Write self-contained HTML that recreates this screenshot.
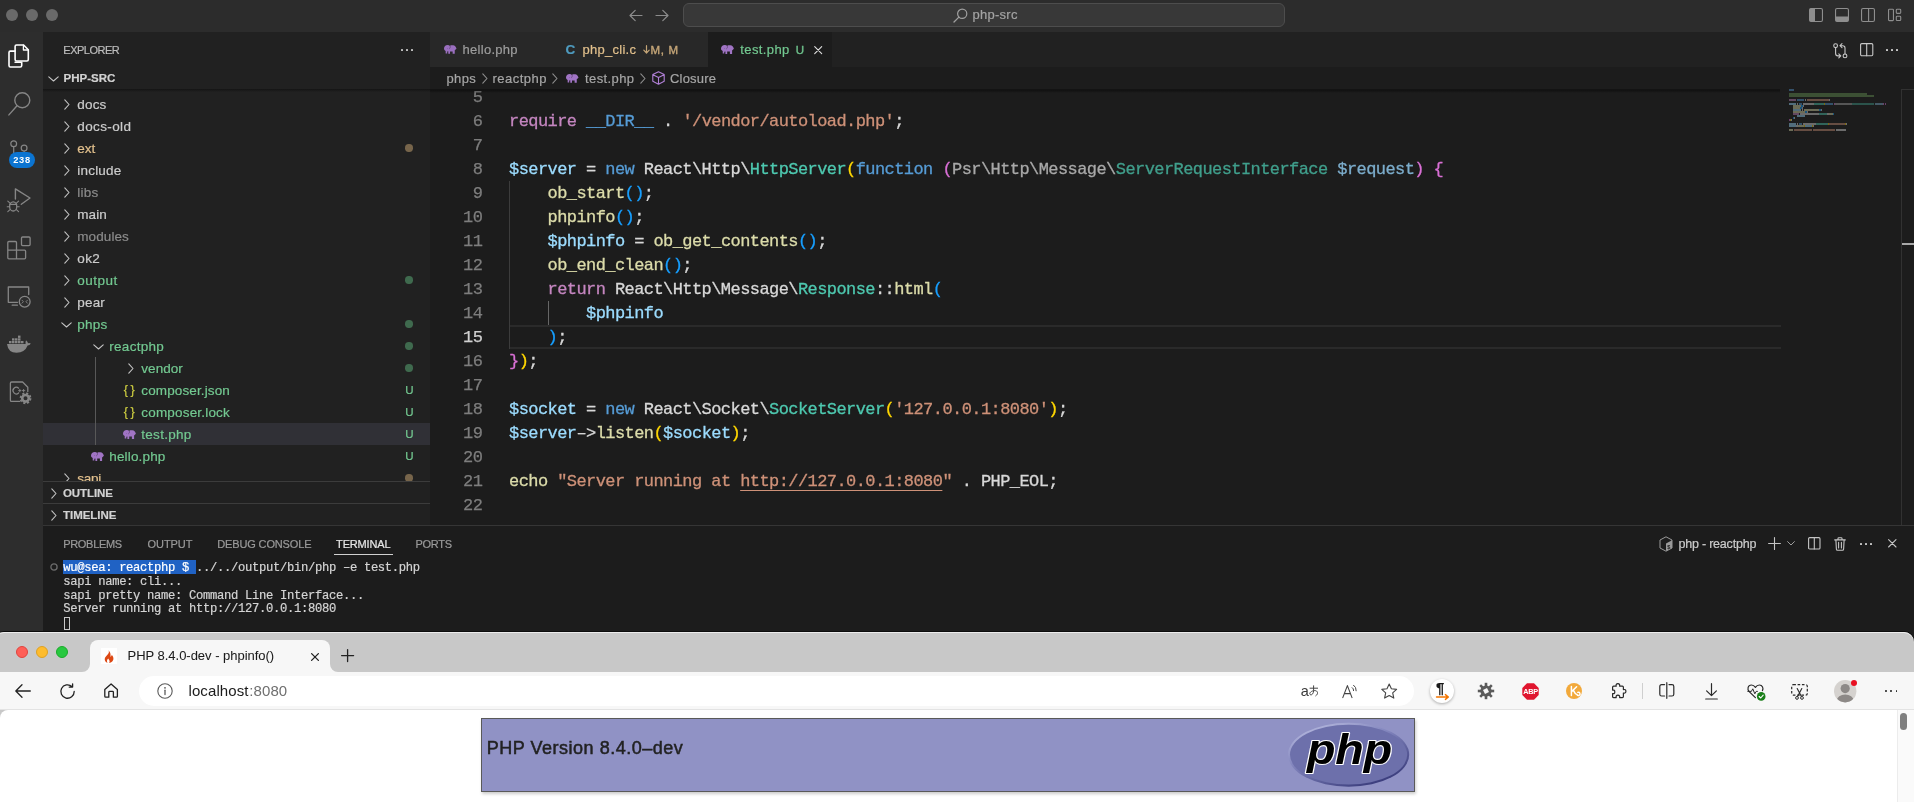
<!DOCTYPE html>
<html><head><meta charset="utf-8"><title>vscode</title>
<style>
*{box-sizing:border-box;margin:0;padding:0}
html,body{width:1914px;height:802px;overflow:hidden;background:#1c1c1c;font-family:"Liberation Sans",sans-serif;}
.t{position:absolute;white-space:pre;-webkit-text-stroke:0.2px}
.r{position:absolute;}
svg{overflow:visible}
#w{position:absolute;left:0;top:0;width:1914px;height:802px;will-change:transform}
.ln{position:absolute;left:430px;width:52.3px;text-align:right;height:24px;line-height:24px;font-family:"Liberation Mono",monospace;font-size:17px;letter-spacing:-0.572px;color:#7d7d7d;padding-top:0.5px;-webkit-text-stroke:0.25px}
.cl{position:absolute;left:509px;height:24px;line-height:24px;font-family:"Liberation Mono",monospace;font-size:17px;letter-spacing:-0.572px;white-space:pre;padding-top:0.5px;-webkit-text-stroke:0.3px}
</style></head><body><div id="w">
<div class="r" style="left:0px;top:0px;width:1914px;height:32px;background:#2c2c2c;"></div>
<div class="r" style="left:6px;top:9px;width:12px;height:12px;background:#6a6a6a;border-radius:50%;"></div>
<div class="r" style="left:26px;top:9px;width:12px;height:12px;background:#6a6a6a;border-radius:50%;"></div>
<div class="r" style="left:46px;top:9px;width:12px;height:12px;background:#6a6a6a;border-radius:50%;"></div>
<svg class="r" style="left:629px;top:9px;" width="14" height="13" viewBox="0 0 14 13"><path d="M13 6.5H1.2M6.2 1.3L1 6.5l5.2 5.2" stroke="#8c8c8c" stroke-width="1.2" fill="none" stroke-linecap="round" stroke-linejoin="round"/></svg>
<svg class="r" style="left:655px;top:9px;" width="14" height="13" viewBox="0 0 14 13"><path d="M1 6.5h11.8M7.8 1.3L13 6.5l-5.2 5.2" stroke="#8c8c8c" stroke-width="1.2" fill="none" stroke-linecap="round" stroke-linejoin="round"/></svg>
<div class="r" style="left:683px;top:3px;width:602px;height:24px;background:#383838;border:1px solid #4d4d4d;border-radius:6px;"></div>
<svg class="r" style="left:953px;top:8px;" width="15" height="15" viewBox="0 0 15 15"><circle cx="9.2" cy="5.8" r="4.6" stroke="#a0a0a0" stroke-width="1.2" fill="none"/><path d="M5.9 9.1L1 14" stroke="#a0a0a0" stroke-width="1.3" stroke-linecap="round"/></svg>
<div class="t" style="left:972.40px;top:6.00px;line-height:18px;font-size:13px;color:#a3a3a3;letter-spacing:0.275px;">php-src</div>
<svg class="r" style="left:1809px;top:8px;" width="14" height="14" viewBox="0 0 14 14"><rect x="0.55" y="0.55" width="12.9" height="12.9" rx="1.5" stroke="#8e8e8e" stroke-width="1.1" fill="none"/><path d="M0.6 2v10q0 1.4 1.4 1.4H6V0.6H2Q0.6 0.6 0.6 2z" fill="#8e8e8e"/></svg>
<svg class="r" style="left:1835px;top:8px;" width="14" height="14" viewBox="0 0 14 14"><rect x="0.55" y="0.55" width="12.9" height="12.9" rx="1.5" stroke="#8e8e8e" stroke-width="1.1" fill="none"/><path d="M0.6 8.6H13.4V12q0 1.4-1.4 1.4H2Q0.6 13.4 0.6 12z" fill="#8e8e8e"/></svg>
<svg class="r" style="left:1861px;top:8px;" width="14" height="14" viewBox="0 0 14 14"><rect x="0.55" y="0.55" width="12.9" height="12.9" rx="1.5" stroke="#8e8e8e" stroke-width="1.1" fill="none"/><path d="M7.6 0.6V13.4" stroke="#8e8e8e" stroke-width="1.1" fill="none"/></svg>
<svg class="r" style="left:1888px;top:8px;" width="14" height="14" viewBox="0 0 14 14"><rect x="0.55" y="1.2" width="4.9" height="11.4" rx="0.8" stroke="#8e8e8e" stroke-width="1.1" fill="none"/><rect x="8.3" y="1.2" width="4.4" height="4.2" rx="0.8" stroke="#8e8e8e" stroke-width="1.1" fill="none"/><rect x="8.3" y="8.3" width="4.4" height="4.2" rx="0.8" stroke="#8e8e8e" stroke-width="1.1" fill="none"/></svg>
<div class="r" style="left:0px;top:32px;width:43px;height:614px;background:#2d2d2d;"></div>
<svg class="r" style="left:0px;top:32px;" width="43" height="50" viewBox="0 32 43 50"><path d="M15.1 62.2H21.7V65.6Q21.7 67 20.3 67H10.4Q9 67 9 65.6V52.5Q9 51.1 10.4 51.1H15.1" stroke="#ffffff" stroke-width="1.6" fill="none" stroke-linejoin="round" stroke-linecap="round"/><path d="M16.5 45H23.6L28.3 49.8V59.6Q28.3 61 26.9 61H16.5Q15.1 61 15.1 59.6V46.4Q15.1 45 16.5 45Z" stroke="#ffffff" stroke-width="1.6" fill="none" stroke-linejoin="round" stroke-linecap="round"/><path d="M23.4 45.2V50H28.1" stroke="#ffffff" stroke-width="1.3" fill="none" stroke-linejoin="round" stroke-linecap="round"/></svg>
<svg class="r" style="left:0px;top:85px;" width="43" height="40" viewBox="0 85 43 40"><circle cx="22.3" cy="100.2" r="7.5" stroke="#868686" stroke-width="1.4" fill="none" stroke-linejoin="round" stroke-linecap="round"/><path d="M16.8 106L8.9 114.9" stroke="#868686" stroke-width="1.4" fill="none" stroke-linejoin="round" stroke-linecap="round"/></svg>
<svg class="r" style="left:0px;top:135px;" width="43" height="40" viewBox="0 135 43 40"><circle cx="13.7" cy="143.7" r="2.9" stroke="#868686" stroke-width="1.2" fill="none" stroke-linejoin="round" stroke-linecap="round"/><circle cx="24.1" cy="148.1" r="2.9" stroke="#868686" stroke-width="1.2" fill="none" stroke-linejoin="round" stroke-linecap="round"/><path d="M13.7 146.8V153M24.1 151V153" stroke="#868686" stroke-width="1.2" fill="none" stroke-linejoin="round" stroke-linecap="round"/></svg>
<div class="r" style="left:9px;top:152px;width:26px;height:16px;background:#0b74d1;border-radius:8px;"></div>
<div class="t" style="left:13.30px;top:153.90px;line-height:12px;font-size:9.3px;color:#ffffff;font-weight:700;letter-spacing:0.642px;-webkit-text-stroke:0;">238</div>
<svg class="r" style="left:0px;top:183px;" width="43" height="40" viewBox="0 183 43 40"><path d="M15.4 199V188.9L30 198L21.3 204.3" stroke="#868686" stroke-width="1.4" fill="none" stroke-linejoin="round" stroke-linecap="round"/><ellipse cx="13.2" cy="206.4" rx="3.6" ry="4.6" stroke="#868686" stroke-width="1.3" fill="none" stroke-linejoin="round" stroke-linecap="round"/><path d="M9.7 204.4H16.7M9.6 206.7H7.2M16.8 206.7H19.2M10 203.2L7.8 201.2M16.4 203.2L18.6 201.2M10 209.6L7.8 211.6M16.4 209.6L18.6 211.6" stroke="#868686" stroke-width="1.1" fill="none" stroke-linejoin="round" stroke-linecap="round"/></svg>
<svg class="r" style="left:0px;top:232px;" width="43" height="34" viewBox="0 232 43 34"><path d="M7.8 250.1V242.6Q7.8 241.5 8.9 241.5H15.4Q16.5 241.5 16.5 242.6V250.1H24.5Q25.6 250.1 25.6 251.2V257.7Q25.6 258.8 24.5 258.8H8.9Q7.8 258.8 7.8 257.7ZM7.8 250.1H16.5V258.8" stroke="#868686" stroke-width="1.3" fill="none" stroke-linejoin="round" stroke-linecap="round"/><rect x="21.5" y="237" width="8.6" height="8.6" rx="1.1" stroke="#868686" stroke-width="1.3" fill="none" stroke-linejoin="round" stroke-linecap="round"/></svg>
<svg class="r" style="left:0px;top:280px;" width="43" height="34" viewBox="0 280 43 34"><path d="M17.5 302.3H8.3V287H28.7V294.5" stroke="#868686" stroke-width="1.3" fill="none" stroke-linejoin="round" stroke-linecap="round"/><path d="M12.2 305.2H17.4" stroke="#868686" stroke-width="1.3" fill="none" stroke-linejoin="round" stroke-linecap="round"/><circle cx="24.7" cy="301.7" r="5.4" stroke="#868686" stroke-width="1.3" fill="none" stroke-linejoin="round" stroke-linecap="round"/><path d="M22 300.2L23.4 301.7L22 303.2M27.4 300.2L26 301.7L27.4 303.2" stroke="#868686" stroke-width="0.9" fill="none" stroke-linejoin="round" stroke-linecap="round"/></svg>
<svg class="r" style="left:0px;top:330px;" width="43" height="30" viewBox="0 330 43 30"><g fill="#868686"><rect x="9" y="341" width="2.5" height="2.3"/><rect x="12" y="341" width="2.5" height="2.3"/><rect x="15" y="341" width="2.5" height="2.3"/><rect x="18" y="341" width="2.5" height="2.3"/><rect x="21" y="341" width="2.5" height="2.3"/><rect x="12" y="338.3" width="2.5" height="2.3"/><rect x="15" y="338.3" width="2.5" height="2.3"/><rect x="18" y="338.3" width="2.5" height="2.3"/><rect x="18" y="335.6" width="2.5" height="2.3"/><path d="M7 344H25.6Q25.3 341.8 26 340.2Q27.8 341.5 28 343.2Q29.8 342.8 30.8 343.6Q29.8 345.4 27.6 345.6Q25 352.6 16.5 352.8Q8.2 352.8 7 344Z"/></g></svg>
<svg class="r" style="left:0px;top:376px;" width="43" height="34" viewBox="0 376 43 34"><path d="M19.5 401.4H11.6Q10.4 401.4 10.4 400.2V383.2Q10.4 382 11.6 382H22.6L27.8 387.2V391.5" stroke="#868686" stroke-width="1.3" fill="none" stroke-linejoin="round" stroke-linecap="round"/><path d="M18.6 388.2A3.3 3.3 0 1 0 18.6 393" stroke="#868686" stroke-width="1.2" fill="none" stroke-linejoin="round" stroke-linecap="round"/><path d="M18.6 390.6H21M19.8 389.4V391.8M22.4 390.6H24.8M23.6 389.4V391.8" stroke="#868686" stroke-width="0.9" fill="none" stroke-linejoin="round" stroke-linecap="round"/><circle cx="25.5" cy="398.3" r="3.3" stroke="#868686" stroke-width="2.6" fill="none"/><circle cx="25.5" cy="398.3" r="5" stroke="#868686" stroke-width="1.8" fill="none" stroke-dasharray="2.1 1.83"/></svg>
<div class="r" style="left:43px;top:32px;width:387px;height:493px;background:#212121;"></div>
<div class="t" style="left:63.30px;top:42.50px;line-height:15px;font-size:11px;color:#bdbdbd;letter-spacing:-0.501px;">EXPLORER</div>
<div class="r" style="left:400.7px;top:49.3px;width:2px;height:1.7px;background:#c0c0c0;border-radius:0.5px;"></div>
<div class="r" style="left:406px;top:49.3px;width:2px;height:1.7px;background:#c0c0c0;border-radius:0.5px;"></div>
<div class="r" style="left:411.2px;top:49.3px;width:2px;height:1.7px;background:#c0c0c0;border-radius:0.5px;"></div>
<svg class="r" style="left:48px;top:75.5px;" width="11" height="6" viewBox="0 0 11 6"><path d="M0.8 0.8L5.5 5L10.2 0.8" stroke="#c5c5c5" stroke-width="1.1" fill="none" stroke-linecap="round" stroke-linejoin="round"/></svg>
<div class="t" style="left:63.60px;top:70.00px;line-height:16px;font-size:11.5px;color:#d2d2d2;font-weight:700;letter-spacing:-0.009px;">PHP-SRC</div>
<div class="r" style="left:43px;top:89px;width:387px;height:3px;background:linear-gradient(#151515,#21212100);"></div>
<svg class="r" style="left:63.5px;top:98.5px;" width="6" height="11" viewBox="0 0 6 11"><path d="M0.8 0.8L5 5.5L0.8 10.2" stroke="#c5c5c5" stroke-width="1.1" fill="none" stroke-linecap="round" stroke-linejoin="round"/></svg>
<div class="t" style="left:77.30px;top:95.30px;line-height:20px;font-size:13.5px;color:#cccccc;letter-spacing:0.161px;">docs</div>
<svg class="r" style="left:63.5px;top:120.5px;" width="6" height="11" viewBox="0 0 6 11"><path d="M0.8 0.8L5 5.5L0.8 10.2" stroke="#c5c5c5" stroke-width="1.1" fill="none" stroke-linecap="round" stroke-linejoin="round"/></svg>
<div class="t" style="left:77.30px;top:117.30px;line-height:20px;font-size:13.5px;color:#cccccc;letter-spacing:0.368px;">docs-old</div>
<svg class="r" style="left:63.5px;top:142.5px;" width="6" height="11" viewBox="0 0 6 11"><path d="M0.8 0.8L5 5.5L0.8 10.2" stroke="#c5c5c5" stroke-width="1.1" fill="none" stroke-linecap="round" stroke-linejoin="round"/></svg>
<div class="t" style="left:77.30px;top:139.30px;line-height:20px;font-size:13.5px;color:#e2c08d;letter-spacing:-0.004px;">ext</div>
<div class="r" style="left:405.3px;top:144.3px;width:7.4px;height:7.4px;background:#77654b;border-radius:50%;"></div>
<svg class="r" style="left:63.5px;top:164.5px;" width="6" height="11" viewBox="0 0 6 11"><path d="M0.8 0.8L5 5.5L0.8 10.2" stroke="#c5c5c5" stroke-width="1.1" fill="none" stroke-linecap="round" stroke-linejoin="round"/></svg>
<div class="t" style="left:77.30px;top:161.30px;line-height:20px;font-size:13.5px;color:#cccccc;letter-spacing:0.203px;">include</div>
<svg class="r" style="left:63.5px;top:186.5px;" width="6" height="11" viewBox="0 0 6 11"><path d="M0.8 0.8L5 5.5L0.8 10.2" stroke="#c5c5c5" stroke-width="1.1" fill="none" stroke-linecap="round" stroke-linejoin="round"/></svg>
<div class="t" style="left:77.30px;top:183.30px;line-height:20px;font-size:13.5px;color:#8b8b8b;letter-spacing:0.248px;">libs</div>
<svg class="r" style="left:63.5px;top:208.5px;" width="6" height="11" viewBox="0 0 6 11"><path d="M0.8 0.8L5 5.5L0.8 10.2" stroke="#c5c5c5" stroke-width="1.1" fill="none" stroke-linecap="round" stroke-linejoin="round"/></svg>
<div class="t" style="left:77.30px;top:205.30px;line-height:20px;font-size:13.5px;color:#cccccc;letter-spacing:0.080px;">main</div>
<svg class="r" style="left:63.5px;top:230.5px;" width="6" height="11" viewBox="0 0 6 11"><path d="M0.8 0.8L5 5.5L0.8 10.2" stroke="#c5c5c5" stroke-width="1.1" fill="none" stroke-linecap="round" stroke-linejoin="round"/></svg>
<div class="t" style="left:77.30px;top:227.30px;line-height:20px;font-size:13.5px;color:#8b8b8b;letter-spacing:0.079px;">modules</div>
<svg class="r" style="left:63.5px;top:252.5px;" width="6" height="11" viewBox="0 0 6 11"><path d="M0.8 0.8L5 5.5L0.8 10.2" stroke="#c5c5c5" stroke-width="1.1" fill="none" stroke-linecap="round" stroke-linejoin="round"/></svg>
<div class="t" style="left:77.30px;top:249.30px;line-height:20px;font-size:13.5px;color:#cccccc;letter-spacing:0.367px;">ok2</div>
<svg class="r" style="left:63.5px;top:274.5px;" width="6" height="11" viewBox="0 0 6 11"><path d="M0.8 0.8L5 5.5L0.8 10.2" stroke="#c5c5c5" stroke-width="1.1" fill="none" stroke-linecap="round" stroke-linejoin="round"/></svg>
<div class="t" style="left:77.30px;top:271.30px;line-height:20px;font-size:13.5px;color:#73c991;letter-spacing:0.493px;">output</div>
<div class="r" style="left:405.3px;top:276.3px;width:7.4px;height:7.4px;background:#3f6a4e;border-radius:50%;"></div>
<svg class="r" style="left:63.5px;top:296.5px;" width="6" height="11" viewBox="0 0 6 11"><path d="M0.8 0.8L5 5.5L0.8 10.2" stroke="#c5c5c5" stroke-width="1.1" fill="none" stroke-linecap="round" stroke-linejoin="round"/></svg>
<div class="t" style="left:77.30px;top:293.30px;line-height:20px;font-size:13.5px;color:#cccccc;letter-spacing:0.160px;">pear</div>
<svg class="r" style="left:60.5px;top:321.5px;" width="11" height="6" viewBox="0 0 11 6"><path d="M0.8 0.8L5.5 5L10.2 0.8" stroke="#c5c5c5" stroke-width="1.1" fill="none" stroke-linecap="round" stroke-linejoin="round"/></svg>
<div class="t" style="left:77.30px;top:315.30px;line-height:20px;font-size:13.5px;color:#73c991;letter-spacing:0.242px;">phps</div>
<div class="r" style="left:405.3px;top:320.3px;width:7.4px;height:7.4px;background:#3f6a4e;border-radius:50%;"></div>
<svg class="r" style="left:92.5px;top:343.5px;" width="11" height="6" viewBox="0 0 11 6"><path d="M0.8 0.8L5.5 5L10.2 0.8" stroke="#c5c5c5" stroke-width="1.1" fill="none" stroke-linecap="round" stroke-linejoin="round"/></svg>
<div class="t" style="left:109.30px;top:337.30px;line-height:20px;font-size:13.5px;color:#73c991;letter-spacing:0.280px;">reactphp</div>
<div class="r" style="left:405.3px;top:342.3px;width:7.4px;height:7.4px;background:#3f6a4e;border-radius:50%;"></div>
<svg class="r" style="left:127.5px;top:362.5px;" width="6" height="11" viewBox="0 0 6 11"><path d="M0.8 0.8L5 5.5L0.8 10.2" stroke="#c5c5c5" stroke-width="1.1" fill="none" stroke-linecap="round" stroke-linejoin="round"/></svg>
<div class="t" style="left:141.30px;top:359.30px;line-height:20px;font-size:13.5px;color:#73c991;letter-spacing:0.044px;">vendor</div>
<div class="r" style="left:405.3px;top:364.3px;width:7.4px;height:7.4px;background:#3f6a4e;border-radius:50%;"></div>
<div class="t" style="left:123.80px;top:382.50px;line-height:14px;font-size:12.5px;color:#cbcb41;letter-spacing:2.650px;">{}</div>
<div class="t" style="left:141.30px;top:381.30px;line-height:20px;font-size:13.5px;color:#73c991;letter-spacing:0.121px;">composer.json</div>
<div class="t" style="left:405.20px;top:382.20px;line-height:16px;font-size:11.5px;color:#73c991;">U</div>
<div class="t" style="left:123.80px;top:404.50px;line-height:14px;font-size:12.5px;color:#cbcb41;letter-spacing:2.650px;">{}</div>
<div class="t" style="left:141.30px;top:403.30px;line-height:20px;font-size:13.5px;color:#73c991;letter-spacing:0.184px;">composer.lock</div>
<div class="t" style="left:405.20px;top:404.20px;line-height:16px;font-size:11.5px;color:#73c991;">U</div>
<div class="r" style="left:43px;top:423px;width:387px;height:22px;background:#303036;"></div>
<svg class="r" style="left:122.7px;top:429.6px;" width="13" height="9.2" viewBox="0 0 13 9.2"><path fill="#a074c4" d="M3.9 0C1.5 0 0 1.6 0 3.6C0 4.9 0.7 5.7 1.7 6.1V8.6H3.3V6.7L4.4 6.5V8.9H6.2V6.6H8.9V9.1H11.1V5.4L12.9 3.7C12.2 1.6 11.2 0.3 9.4 0.3H6.9L6.2 0.9C5.6 0.3 4.8 0 3.9 0Z"/><path d="M6.3 0.9C6.7 2.2 6.3 3.3 5.4 3.9" stroke="rgba(0,0,0,.55)" stroke-width="0.55" fill="none"/><circle cx="3.5" cy="3.6" r="0.4" fill="rgba(0,0,0,.35)"/></svg>
<div class="t" style="left:141.30px;top:425.30px;line-height:20px;font-size:13.5px;color:#73c991;letter-spacing:0.281px;">test.php</div>
<div class="t" style="left:405.20px;top:426.20px;line-height:16px;font-size:11.5px;color:#73c991;">U</div>
<svg class="r" style="left:90.7px;top:451.6px;" width="13" height="9.2" viewBox="0 0 13 9.2"><path fill="#a074c4" d="M3.9 0C1.5 0 0 1.6 0 3.6C0 4.9 0.7 5.7 1.7 6.1V8.6H3.3V6.7L4.4 6.5V8.9H6.2V6.6H8.9V9.1H11.1V5.4L12.9 3.7C12.2 1.6 11.2 0.3 9.4 0.3H6.9L6.2 0.9C5.6 0.3 4.8 0 3.9 0Z"/><path d="M6.3 0.9C6.7 2.2 6.3 3.3 5.4 3.9" stroke="rgba(0,0,0,.55)" stroke-width="0.55" fill="none"/><circle cx="3.5" cy="3.6" r="0.4" fill="rgba(0,0,0,.35)"/></svg>
<div class="t" style="left:109.30px;top:447.30px;line-height:20px;font-size:13.5px;color:#73c991;letter-spacing:0.150px;">hello.php</div>
<div class="t" style="left:405.20px;top:448.20px;line-height:16px;font-size:11.5px;color:#73c991;">U</div>
<svg class="r" style="left:63.5px;top:472.5px;" width="6" height="11" viewBox="0 0 6 11"><path d="M0.8 0.8L5 5.5L0.8 10.2" stroke="#c5c5c5" stroke-width="1.1" fill="none" stroke-linecap="round" stroke-linejoin="round"/></svg>
<div class="t" style="left:77.30px;top:469.30px;line-height:20px;font-size:13.5px;color:#e2c08d;letter-spacing:-0.255px;">sapi</div>
<div class="r" style="left:405.3px;top:474.3px;width:7.4px;height:7.4px;background:#77654b;border-radius:50%;"></div>
<div class="r" style="left:95px;top:357px;width:1px;height:88px;background:#585858;"></div>
<div class="r" style="left:43px;top:481px;width:387px;height:44px;background:#212121;"></div>
<div class="r" style="left:43px;top:481px;width:387px;height:1px;background:#3c3c3c;"></div>
<div class="r" style="left:43px;top:503px;width:387px;height:1px;background:#3c3c3c;"></div>
<svg class="r" style="left:50.5px;top:487.5px;" width="6" height="11" viewBox="0 0 6 11"><path d="M0.8 0.8L5 5.5L0.8 10.2" stroke="#c5c5c5" stroke-width="1.1" fill="none" stroke-linecap="round" stroke-linejoin="round"/></svg>
<div class="t" style="left:63.00px;top:485.00px;line-height:16px;font-size:11.5px;color:#d2d2d2;font-weight:700;letter-spacing:-0.078px;">OUTLINE</div>
<svg class="r" style="left:50.5px;top:509.5px;" width="6" height="11" viewBox="0 0 6 11"><path d="M0.8 0.8L5 5.5L0.8 10.2" stroke="#c5c5c5" stroke-width="1.1" fill="none" stroke-linecap="round" stroke-linejoin="round"/></svg>
<div class="t" style="left:63.00px;top:507.00px;line-height:16px;font-size:11.5px;color:#d2d2d2;font-weight:700;letter-spacing:-0.024px;">TIMELINE</div>
<div class="r" style="left:430px;top:32px;width:1484px;height:493px;background:#1c1c1c;"></div>
<div class="r" style="left:430px;top:32px;width:1484px;height:35px;background:#212121;"></div>
<div class="r" style="left:430px;top:32px;width:119.5px;height:35px;background:#282828;"></div>
<div class="r" style="left:550.3px;top:32px;width:157.4px;height:35px;background:#282828;"></div>
<div class="r" style="left:708px;top:32px;width:124px;height:35px;background:#1c1c1c;"></div>
<svg class="r" style="left:443.6px;top:45px;" width="12.6" height="9" viewBox="0 0 13 9.2"><path fill="#9a6fbf" d="M3.9 0C1.5 0 0 1.6 0 3.6C0 4.9 0.7 5.7 1.7 6.1V8.6H3.3V6.7L4.4 6.5V8.9H6.2V6.6H8.9V9.1H11.1V5.4L12.9 3.7C12.2 1.6 11.2 0.3 9.4 0.3H6.9L6.2 0.9C5.6 0.3 4.8 0 3.9 0Z"/><path d="M6.3 0.9C6.7 2.2 6.3 3.3 5.4 3.9" stroke="rgba(0,0,0,.55)" stroke-width="0.55" fill="none"/><circle cx="3.5" cy="3.6" r="0.4" fill="rgba(0,0,0,.35)"/></svg>
<div class="t" style="left:462.60px;top:40.60px;line-height:18px;font-size:13px;color:#9d9d9d;letter-spacing:0.279px;">hello.php</div>
<div class="t" style="left:565.60px;top:40.50px;line-height:18px;font-size:13.5px;color:#4f9cc0;font-weight:700;">C</div>
<div class="t" style="left:582.60px;top:40.60px;line-height:18px;font-size:13px;color:#e2c08d;letter-spacing:0.261px;">php_cli.c</div>
<svg class="r" style="left:642.5px;top:45px;" width="7" height="9" viewBox="0 0 7 9"><path d="M3.5 0.7V8M0.8 5.2L3.5 8L6.2 5.2" stroke="#c4a577" stroke-width="1.2" fill="none" stroke-linecap="round" stroke-linejoin="round"/></svg>
<div class="t" style="left:650.50px;top:41.80px;line-height:16px;font-size:11.5px;color:#c4a577;letter-spacing:0.717px;-webkit-text-stroke:0.4px;">M, M</div>
<svg class="r" style="left:721px;top:44.8px;" width="13" height="9.2" viewBox="0 0 13 9.2"><path fill="#a074c4" d="M3.9 0C1.5 0 0 1.6 0 3.6C0 4.9 0.7 5.7 1.7 6.1V8.6H3.3V6.7L4.4 6.5V8.9H6.2V6.6H8.9V9.1H11.1V5.4L12.9 3.7C12.2 1.6 11.2 0.3 9.4 0.3H6.9L6.2 0.9C5.6 0.3 4.8 0 3.9 0Z"/><path d="M6.3 0.9C6.7 2.2 6.3 3.3 5.4 3.9" stroke="rgba(0,0,0,.55)" stroke-width="0.55" fill="none"/><circle cx="3.5" cy="3.6" r="0.4" fill="rgba(0,0,0,.35)"/></svg>
<div class="t" style="left:740.30px;top:40.60px;line-height:18px;font-size:13px;color:#73c991;letter-spacing:0.392px;">test.php</div>
<div class="t" style="left:795.80px;top:41.80px;line-height:16px;font-size:11.5px;color:#6cbf8a;-webkit-text-stroke:0.4px;">U</div>
<svg class="r" style="left:814px;top:45.8px;" width="8.4" height="8.4" viewBox="0 0 8.4 8.4"><path d="M0.7 0.7L7.7 7.7M7.7 0.7L0.7 7.7" stroke="#e0e0e0" stroke-width="1.1" stroke-linecap="round"/></svg>
<svg class="r" style="left:1832.5px;top:42.5px;" width="15" height="16" viewBox="0 0 15 16"><circle cx="2.6" cy="2.7" r="1.9" stroke="#c8c8c8" stroke-width="1.1" fill="none" stroke-linecap="round" stroke-linejoin="round"/><circle cx="12" cy="12.9" r="1.9" stroke="#c8c8c8" stroke-width="1.1" fill="none" stroke-linecap="round" stroke-linejoin="round"/><path d="M2.6 4.7V10.6Q2.6 12.9 4.9 12.9H7.6M5.8 10.9L7.8 12.9L5.8 14.9M12 10.9V5Q12 2.7 9.7 2.7H7.2M9 0.7L7 2.7L9 4.7" stroke="#c8c8c8" stroke-width="1.1" fill="none" stroke-linecap="round" stroke-linejoin="round"/></svg>
<svg class="r" style="left:1860px;top:43px;" width="13.4" height="13.4" viewBox="0 0 13.4 13.4"><rect x="0.6" y="0.6" width="12.2" height="12.2" rx="1.2" stroke="#c8c8c8" stroke-width="1.1" fill="none" stroke-linecap="round" stroke-linejoin="round"/><path d="M6.7 0.6V12.8" stroke="#c8c8c8" stroke-width="1.1" fill="none" stroke-linecap="round" stroke-linejoin="round"/></svg>
<div class="r" style="left:1885.7px;top:49.4px;width:2px;height:1.7px;background:#c8c8c8;border-radius:0.5px;"></div>
<div class="r" style="left:1891px;top:49.4px;width:2px;height:1.7px;background:#c8c8c8;border-radius:0.5px;"></div>
<div class="r" style="left:1896.3px;top:49.4px;width:2px;height:1.7px;background:#c8c8c8;border-radius:0.5px;"></div>
<div class="t" style="left:446.50px;top:69.90px;line-height:18px;font-size:13px;color:#a6a6a6;letter-spacing:0.370px;">phps</div>
<svg class="r" style="left:481.6px;top:73.3px;" width="6" height="11" viewBox="0 0 6 11"><path d="M0.8 0.8L5 5.5L0.8 10.2" stroke="#8f8f8f" stroke-width="1.1" fill="none" stroke-linecap="round" stroke-linejoin="round"/></svg>
<div class="t" style="left:492.40px;top:69.90px;line-height:18px;font-size:13px;color:#a6a6a6;letter-spacing:0.487px;">reactphp</div>
<svg class="r" style="left:552px;top:73.3px;" width="6" height="11" viewBox="0 0 6 11"><path d="M0.8 0.8L5 5.5L0.8 10.2" stroke="#8f8f8f" stroke-width="1.1" fill="none" stroke-linecap="round" stroke-linejoin="round"/></svg>
<svg class="r" style="left:565.8px;top:74px;" width="12.6" height="9" viewBox="0 0 13 9.2"><path fill="#a074c4" d="M3.9 0C1.5 0 0 1.6 0 3.6C0 4.9 0.7 5.7 1.7 6.1V8.6H3.3V6.7L4.4 6.5V8.9H6.2V6.6H8.9V9.1H11.1V5.4L12.9 3.7C12.2 1.6 11.2 0.3 9.4 0.3H6.9L6.2 0.9C5.6 0.3 4.8 0 3.9 0Z"/><path d="M6.3 0.9C6.7 2.2 6.3 3.3 5.4 3.9" stroke="rgba(0,0,0,.55)" stroke-width="0.55" fill="none"/><circle cx="3.5" cy="3.6" r="0.4" fill="rgba(0,0,0,.35)"/></svg>
<div class="t" style="left:585.00px;top:69.90px;line-height:18px;font-size:13px;color:#a6a6a6;letter-spacing:0.392px;">test.php</div>
<svg class="r" style="left:640px;top:73.3px;" width="6" height="11" viewBox="0 0 6 11"><path d="M0.8 0.8L5 5.5L0.8 10.2" stroke="#8f8f8f" stroke-width="1.1" fill="none" stroke-linecap="round" stroke-linejoin="round"/></svg>
<svg class="r" style="left:652.3px;top:71.3px;" width="13" height="14" viewBox="0 0 13 14"><path d="M6.5 0.8L12.2 3.6V10.2L6.5 13.2L0.8 10.2V3.6ZM0.9 3.7L6.5 6.6L12.1 3.7M6.5 6.6V13.1" stroke="#b180d7" stroke-width="1.1" fill="none" stroke-linejoin="round"/></svg>
<div class="t" style="left:670.00px;top:69.90px;line-height:18px;font-size:13px;color:#a6a6a6;letter-spacing:0.201px;">Closure</div>
<div class="r" style="left:510px;top:325px;width:1271px;height:24px;background:transparent;border-top:2px solid #2a2a2a;border-bottom:2px solid #2a2a2a;"></div>
<div class="r" style="left:509px;top:181px;width:1px;height:168px;background:#3c3c3c;"></div>
<div class="r" style="left:548px;top:301px;width:1px;height:24px;background:#666666;"></div>
<div class="ln" style="top:85px;">5</div>
<div class="ln" style="top:109px;">6</div>
<div class="cl" style="top:109px"><span style="color:#c586c0;">require</span><span style="color:#d8d8d8;"> </span><span style="color:#569cd6;">__DIR__</span><span style="color:#d8d8d8;"> . </span><span style="color:#ce9178;">'/vendor/autoload.php'</span><span style="color:#d8d8d8;">;</span></div>
<div class="ln" style="top:133px;">7</div>
<div class="ln" style="top:157px;">8</div>
<div class="cl" style="top:157px"><span style="color:#9cdcfe;">$server</span><span style="color:#d8d8d8;"> = </span><span style="color:#569cd6;">new</span><span style="color:#d8d8d8;"> React\Http\</span><span style="color:#4ec9b0;">HttpServer</span><span style="color:#ffd700;">(</span><span style="color:#569cd6;">function</span><span style="color:#d8d8d8;"> </span><span style="color:#da70d6;">(</span><span style="color:#a8a8a8;">Psr\Http\Message\</span><span style="color:#409f8c;">ServerRequestInterface</span><span style="color:#d8d8d8;"> </span><span style="color:#7cadcc;">$request</span><span style="color:#da70d6;">)</span><span style="color:#d8d8d8;"> </span><span style="color:#da70d6;">{</span></div>
<div class="ln" style="top:181px;">9</div>
<div class="cl" style="top:181px"><span style="color:#d8d8d8;">    </span><span style="color:#dcdcaa;">ob_start</span><span style="color:#179fff;">()</span><span style="color:#d8d8d8;">;</span></div>
<div class="ln" style="top:205px;">10</div>
<div class="cl" style="top:205px"><span style="color:#d8d8d8;">    </span><span style="color:#dcdcaa;">phpinfo</span><span style="color:#179fff;">()</span><span style="color:#d8d8d8;">;</span></div>
<div class="ln" style="top:229px;">11</div>
<div class="cl" style="top:229px"><span style="color:#d8d8d8;">    </span><span style="color:#9cdcfe;">$phpinfo</span><span style="color:#d8d8d8;"> = </span><span style="color:#dcdcaa;">ob_get_contents</span><span style="color:#179fff;">()</span><span style="color:#d8d8d8;">;</span></div>
<div class="ln" style="top:253px;">12</div>
<div class="cl" style="top:253px"><span style="color:#d8d8d8;">    </span><span style="color:#dcdcaa;">ob_end_clean</span><span style="color:#179fff;">()</span><span style="color:#d8d8d8;">;</span></div>
<div class="ln" style="top:277px;">13</div>
<div class="cl" style="top:277px"><span style="color:#d8d8d8;">    </span><span style="color:#c586c0;">return</span><span style="color:#d8d8d8;"> React\Http\Message\</span><span style="color:#4ec9b0;">Response</span><span style="color:#d8d8d8;">::</span><span style="color:#dcdcaa;">html</span><span style="color:#179fff;">(</span></div>
<div class="ln" style="top:301px;">14</div>
<div class="cl" style="top:301px"><span style="color:#d8d8d8;">        </span><span style="color:#9cdcfe;">$phpinfo</span></div>
<div class="ln" style="top:325px;color:#d0d0d0;">15</div>
<div class="cl" style="top:325px"><span style="color:#d8d8d8;">    </span><span style="color:#179fff;">)</span><span style="color:#d8d8d8;">;</span></div>
<div class="ln" style="top:349px;">16</div>
<div class="cl" style="top:349px"><span style="color:#da70d6;">}</span><span style="color:#ffd700;">)</span><span style="color:#d8d8d8;">;</span></div>
<div class="ln" style="top:373px;">17</div>
<div class="ln" style="top:397px;">18</div>
<div class="cl" style="top:397px"><span style="color:#9cdcfe;">$socket</span><span style="color:#d8d8d8;"> = </span><span style="color:#569cd6;">new</span><span style="color:#d8d8d8;"> React\Socket\</span><span style="color:#4ec9b0;">SocketServer</span><span style="color:#ffd700;">(</span><span style="color:#ce9178;">'127.0.0.1:8080'</span><span style="color:#ffd700;">)</span><span style="color:#d8d8d8;">;</span></div>
<div class="ln" style="top:421px;">19</div>
<div class="cl" style="top:421px"><span style="color:#9cdcfe;">$server</span><span style="color:#d8d8d8;">–&gt;</span><span style="color:#dcdcaa;">listen</span><span style="color:#ffd700;">(</span><span style="color:#9cdcfe;">$socket</span><span style="color:#ffd700;">)</span><span style="color:#d8d8d8;">;</span></div>
<div class="ln" style="top:445px;">20</div>
<div class="ln" style="top:469px;">21</div>
<div class="cl" style="top:469px"><span style="color:#dcdcaa;">echo</span><span style="color:#d8d8d8;"> </span><span style="color:#ce9178;">"Server running at </span><span style="color:#ce9178;text-decoration:underline;text-underline-offset:4px;text-decoration-thickness:1px;">http://127.0.0.1:8080</span><span style="color:#ce9178;">"</span><span style="color:#d8d8d8;"> . PHP_EOL;</span></div>
<div class="ln" style="top:493px;">22</div>
<div class="r" style="left:430px;top:89px;width:1350px;height:4px;background:linear-gradient(rgba(0,0,0,.55),rgba(0,0,0,0));"></div>
<div class="r" style="left:430px;top:88.5px;width:1350px;height:1.2px;background:#131313;"></div>
<div class="r" style="left:1789px;top:99.05px;width:7px;height:1.7px;background:#c586c0;opacity:.42;"></div>
<div class="r" style="left:1797px;top:99.05px;width:7px;height:1.7px;background:#569cd6;opacity:.42;"></div>
<div class="r" style="left:1805px;top:99.05px;width:1px;height:1.7px;background:#d8d8d8;opacity:.42;"></div>
<div class="r" style="left:1807px;top:99.05px;width:22px;height:1.7px;background:#ce9178;opacity:.42;"></div>
<div class="r" style="left:1829px;top:99.05px;width:1px;height:1.7px;background:#d8d8d8;opacity:.42;"></div>
<div class="r" style="left:1789px;top:103.07px;width:7px;height:1.7px;background:#9cdcfe;opacity:.42;"></div>
<div class="r" style="left:1797px;top:103.07px;width:1px;height:1.7px;background:#d8d8d8;opacity:.42;"></div>
<div class="r" style="left:1799px;top:103.07px;width:3px;height:1.7px;background:#569cd6;opacity:.42;"></div>
<div class="r" style="left:1803px;top:103.07px;width:11px;height:1.7px;background:#d8d8d8;opacity:.42;"></div>
<div class="r" style="left:1814px;top:103.07px;width:10px;height:1.7px;background:#4ec9b0;opacity:.42;"></div>
<div class="r" style="left:1824px;top:103.07px;width:1px;height:1.7px;background:#ffd700;opacity:.42;"></div>
<div class="r" style="left:1825px;top:103.07px;width:8px;height:1.7px;background:#569cd6;opacity:.42;"></div>
<div class="r" style="left:1834px;top:103.07px;width:1px;height:1.7px;background:#da70d6;opacity:.42;"></div>
<div class="r" style="left:1835px;top:103.07px;width:17px;height:1.7px;background:#a8a8a8;opacity:.42;"></div>
<div class="r" style="left:1852px;top:103.07px;width:22px;height:1.7px;background:#409f8c;opacity:.42;"></div>
<div class="r" style="left:1875px;top:103.07px;width:8px;height:1.7px;background:#7cadcc;opacity:.42;"></div>
<div class="r" style="left:1883px;top:103.07px;width:1px;height:1.7px;background:#da70d6;opacity:.42;"></div>
<div class="r" style="left:1885px;top:103.07px;width:1px;height:1.7px;background:#da70d6;opacity:.42;"></div>
<div class="r" style="left:1793px;top:105.08px;width:8px;height:1.7px;background:#dcdcaa;opacity:.42;"></div>
<div class="r" style="left:1801px;top:105.08px;width:2px;height:1.7px;background:#179fff;opacity:.42;"></div>
<div class="r" style="left:1803px;top:105.08px;width:1px;height:1.7px;background:#d8d8d8;opacity:.42;"></div>
<div class="r" style="left:1793px;top:107.09px;width:7px;height:1.7px;background:#dcdcaa;opacity:.42;"></div>
<div class="r" style="left:1800px;top:107.09px;width:2px;height:1.7px;background:#179fff;opacity:.42;"></div>
<div class="r" style="left:1802px;top:107.09px;width:1px;height:1.7px;background:#d8d8d8;opacity:.42;"></div>
<div class="r" style="left:1793px;top:109.1px;width:8px;height:1.7px;background:#9cdcfe;opacity:.42;"></div>
<div class="r" style="left:1802px;top:109.1px;width:1px;height:1.7px;background:#d8d8d8;opacity:.42;"></div>
<div class="r" style="left:1804px;top:109.1px;width:15px;height:1.7px;background:#dcdcaa;opacity:.42;"></div>
<div class="r" style="left:1819px;top:109.1px;width:2px;height:1.7px;background:#179fff;opacity:.42;"></div>
<div class="r" style="left:1821px;top:109.1px;width:1px;height:1.7px;background:#d8d8d8;opacity:.42;"></div>
<div class="r" style="left:1793px;top:111.11px;width:12px;height:1.7px;background:#dcdcaa;opacity:.42;"></div>
<div class="r" style="left:1805px;top:111.11px;width:2px;height:1.7px;background:#179fff;opacity:.42;"></div>
<div class="r" style="left:1807px;top:111.11px;width:1px;height:1.7px;background:#d8d8d8;opacity:.42;"></div>
<div class="r" style="left:1793px;top:113.12px;width:6px;height:1.7px;background:#c586c0;opacity:.42;"></div>
<div class="r" style="left:1800px;top:113.12px;width:19px;height:1.7px;background:#d8d8d8;opacity:.42;"></div>
<div class="r" style="left:1819px;top:113.12px;width:8px;height:1.7px;background:#4ec9b0;opacity:.42;"></div>
<div class="r" style="left:1827px;top:113.12px;width:2px;height:1.7px;background:#d8d8d8;opacity:.42;"></div>
<div class="r" style="left:1829px;top:113.12px;width:4px;height:1.7px;background:#dcdcaa;opacity:.42;"></div>
<div class="r" style="left:1833px;top:113.12px;width:1px;height:1.7px;background:#179fff;opacity:.42;"></div>
<div class="r" style="left:1797px;top:115.13px;width:8px;height:1.7px;background:#9cdcfe;opacity:.42;"></div>
<div class="r" style="left:1793px;top:117.14px;width:1px;height:1.7px;background:#179fff;opacity:.42;"></div>
<div class="r" style="left:1794px;top:117.14px;width:1px;height:1.7px;background:#d8d8d8;opacity:.42;"></div>
<div class="r" style="left:1789px;top:119.15px;width:1px;height:1.7px;background:#da70d6;opacity:.42;"></div>
<div class="r" style="left:1790px;top:119.15px;width:1px;height:1.7px;background:#ffd700;opacity:.42;"></div>
<div class="r" style="left:1791px;top:119.15px;width:1px;height:1.7px;background:#d8d8d8;opacity:.42;"></div>
<div class="r" style="left:1789px;top:123.17px;width:7px;height:1.7px;background:#9cdcfe;opacity:.42;"></div>
<div class="r" style="left:1797px;top:123.17px;width:1px;height:1.7px;background:#d8d8d8;opacity:.42;"></div>
<div class="r" style="left:1799px;top:123.17px;width:3px;height:1.7px;background:#569cd6;opacity:.42;"></div>
<div class="r" style="left:1803px;top:123.17px;width:13px;height:1.7px;background:#d8d8d8;opacity:.42;"></div>
<div class="r" style="left:1816px;top:123.17px;width:12px;height:1.7px;background:#4ec9b0;opacity:.42;"></div>
<div class="r" style="left:1828px;top:123.17px;width:1px;height:1.7px;background:#ffd700;opacity:.42;"></div>
<div class="r" style="left:1829px;top:123.17px;width:16px;height:1.7px;background:#ce9178;opacity:.42;"></div>
<div class="r" style="left:1845px;top:123.17px;width:1px;height:1.7px;background:#ffd700;opacity:.42;"></div>
<div class="r" style="left:1846px;top:123.17px;width:1px;height:1.7px;background:#d8d8d8;opacity:.42;"></div>
<div class="r" style="left:1789px;top:125.18px;width:7px;height:1.7px;background:#9cdcfe;opacity:.42;"></div>
<div class="r" style="left:1796px;top:125.18px;width:2px;height:1.7px;background:#d8d8d8;opacity:.42;"></div>
<div class="r" style="left:1798px;top:125.18px;width:6px;height:1.7px;background:#dcdcaa;opacity:.42;"></div>
<div class="r" style="left:1804px;top:125.18px;width:1px;height:1.7px;background:#ffd700;opacity:.42;"></div>
<div class="r" style="left:1805px;top:125.18px;width:7px;height:1.7px;background:#9cdcfe;opacity:.42;"></div>
<div class="r" style="left:1812px;top:125.18px;width:1px;height:1.7px;background:#ffd700;opacity:.42;"></div>
<div class="r" style="left:1813px;top:125.18px;width:1px;height:1.7px;background:#d8d8d8;opacity:.42;"></div>
<div class="r" style="left:1789px;top:129.2px;width:4px;height:1.7px;background:#dcdcaa;opacity:.42;"></div>
<div class="r" style="left:1794px;top:129.2px;width:18px;height:1.7px;background:#ce9178;opacity:.42;"></div>
<div class="r" style="left:1813px;top:129.2px;width:21px;height:1.7px;background:#ce9178;opacity:.42;"></div>
<div class="r" style="left:1834px;top:129.2px;width:1px;height:1.7px;background:#ce9178;opacity:.42;"></div>
<div class="r" style="left:1836px;top:129.2px;width:10px;height:1.7px;background:#d8d8d8;opacity:.42;"></div>
<div class="r" style="left:1789px;top:89px;width:5px;height:1.7px;background:#569cd6;opacity:.42;"></div>
<div class="r" style="left:1789px;top:93.02px;width:78px;height:1.7px;background:#6a9955;opacity:.42;"></div>
<div class="r" style="left:1789px;top:95.03px;width:85px;height:1.7px;background:#6a9955;opacity:.42;"></div>
<div class="r" style="left:1901px;top:89px;width:1px;height:436px;background:#313131;"></div>
<div class="r" style="left:1901px;top:89px;width:13px;height:1px;background:#313131;"></div>
<div class="r" style="left:1902px;top:242.5px;width:12px;height:2px;background:#a8a8a8;"></div>
<div class="r" style="left:43px;top:525px;width:1871px;height:107px;background:#1c1c1c;"></div>
<div class="r" style="left:43px;top:525px;width:1871px;height:1px;background:#353535;"></div>
<div class="t" style="left:63.20px;top:536.50px;line-height:15px;font-size:11px;color:#9a9a9a;letter-spacing:-0.304px;">PROBLEMS</div>
<div class="t" style="left:147.60px;top:536.50px;line-height:15px;font-size:11px;color:#9a9a9a;letter-spacing:-0.084px;">OUTPUT</div>
<div class="t" style="left:217.30px;top:536.50px;line-height:15px;font-size:11px;color:#9a9a9a;letter-spacing:-0.147px;">DEBUG CONSOLE</div>
<div class="t" style="left:336.10px;top:536.50px;line-height:15px;font-size:11px;color:#e7e7e7;letter-spacing:-0.160px;">TERMINAL</div>
<div class="t" style="left:415.40px;top:536.50px;line-height:15px;font-size:11px;color:#9a9a9a;letter-spacing:-0.224px;">PORTS</div>
<div class="r" style="left:334px;top:554px;width:59px;height:1px;background:#d0d0d0;"></div>
<div class="r" style="left:63.2px;top:560px;width:132.8px;height:13.8px;background:#2062c4;"></div>
<svg class="r" style="left:50px;top:563px;" width="8" height="8" viewBox="0 0 8 8"><circle cx="4" cy="4" r="3.1" stroke="#6b6b6b" stroke-width="1.3" fill="none"/></svg>
<div class="t" style="left:63.2px;top:560.90px;font-family:'Liberation Mono',monospace;font-size:12.2px;letter-spacing:-0.321px;line-height:14px;color:#d4d4d4;-webkit-text-stroke:0.2px;"><span style="color:#fff">wu@sea: reactphp $ </span>../../output/bin/php –e test.php</div>
<div class="t" style="left:63.2px;top:574.70px;font-family:'Liberation Mono',monospace;font-size:12.2px;letter-spacing:-0.321px;line-height:14px;color:#d4d4d4;-webkit-text-stroke:0.2px;">sapi name: cli...</div>
<div class="t" style="left:63.2px;top:588.50px;font-family:'Liberation Mono',monospace;font-size:12.2px;letter-spacing:-0.321px;line-height:14px;color:#d4d4d4;-webkit-text-stroke:0.2px;">sapi pretty name: Command Line Interface...</div>
<div class="t" style="left:63.2px;top:602.30px;font-family:'Liberation Mono',monospace;font-size:12.2px;letter-spacing:-0.321px;line-height:14px;color:#d4d4d4;-webkit-text-stroke:0.2px;">Server running at http://127.0.0.1:8080</div>
<div class="r" style="left:63.5px;top:616.8px;width:6.6px;height:13px;background:transparent;border:1px solid #c8c8c8;"></div>
<svg class="r" style="left:1658.5px;top:536px;" width="14" height="16" viewBox="0 0 14 16"><path d="M7 0.8L13 4V12L7 15.2L1 12V4Z" stroke="#9a9a9a" stroke-width="1" fill="none" stroke-linejoin="round"/><path d="M7 7.4L13 4.3V12L7 15.1Z" fill="#9a9a9a"/><text x="8.2" y="13" font-size="5.5" font-weight="700" fill="#1c1c1c" font-family="Liberation Sans">$</text></svg>
<div class="t" style="left:1678.40px;top:534.90px;line-height:18px;font-size:12.5px;color:#cccccc;letter-spacing:-0.201px;">php - reactphp</div>
<svg class="r" style="left:1767.5px;top:537px;" width="13" height="13" viewBox="0 0 13 13"><path d="M6.5 0.6V12.4M0.6 6.5H12.4" stroke="#c5c5c5" stroke-width="1.1" fill="none" stroke-linecap="round" stroke-linejoin="round"/></svg>
<svg class="r" style="left:1787px;top:541px;" width="8" height="5" viewBox="0 0 8 5"><path d="M0.6 0.6L4 4L7.4 0.6" stroke="#9d9d9d" stroke-width="1" fill="none" stroke-linecap="round" stroke-linejoin="round"/></svg>
<svg class="r" style="left:1808px;top:536.8px;" width="12.6" height="12.6" viewBox="0 0 12.6 12.6"><rect x="0.6" y="0.6" width="11.4" height="11.4" rx="1.1" stroke="#c5c5c5" stroke-width="1.1" fill="none" stroke-linecap="round" stroke-linejoin="round"/><path d="M6.3 0.6V12" stroke="#c5c5c5" stroke-width="1.1" fill="none" stroke-linecap="round" stroke-linejoin="round"/></svg>
<svg class="r" style="left:1833.5px;top:536.5px;" width="12" height="14" viewBox="0 0 12 14"><path d="M0.7 2.9H11.3M4 2.7V1.5Q4 0.7 4.8 0.7H7.2Q8 0.7 8 1.5V2.7M1.9 3.1L2.4 12.3Q2.45 13.3 3.45 13.3H8.55Q9.55 13.3 9.6 12.3L10.1 3.1M4.6 5.4V10.9M7.4 5.4V10.9" stroke="#c5c5c5" stroke-width="1.1" fill="none" stroke-linecap="round" stroke-linejoin="round"/></svg>
<div class="r" style="left:1860px;top:543px;width:2px;height:1.7px;background:#c5c5c5;border-radius:0.5px;"></div>
<div class="r" style="left:1865px;top:543px;width:2px;height:1.7px;background:#c5c5c5;border-radius:0.5px;"></div>
<div class="r" style="left:1870.3px;top:543px;width:2px;height:1.7px;background:#c5c5c5;border-radius:0.5px;"></div>
<svg class="r" style="left:1887.5px;top:539.3px;" width="8.6" height="8.6" viewBox="0 0 8.6 8.6"><path d="M0.6 0.6L8 8M8 0.6L0.6 8" stroke="#c5c5c5" stroke-width="1.1" fill="none" stroke-linecap="round" stroke-linejoin="round"/></svg>
<div class="r" style="left:-6.5px;top:632px;width:1920.5px;height:170px;background:#c8c8c8;border-radius:10px 10px 0 0;box-shadow:0 -1px 0 #0c0c0c, inset 0 1px 0 #ececec;"></div>
<div class="r" style="left:16px;top:646.2px;width:12px;height:12px;background:#fe5f57;border-radius:50%;border:0.5px solid #e0443e;"></div>
<div class="r" style="left:35.8px;top:646.2px;width:12px;height:12px;background:#febc2e;border-radius:50%;border:0.5px solid #dea123;"></div>
<div class="r" style="left:56px;top:646.2px;width:12px;height:12px;background:#28c840;border-radius:50%;border:0.5px solid #1aab29;"></div>
<div class="r" style="left:90px;top:640px;width:240.3px;height:32px;background:#f7f7f7;border-radius:8px 8px 0 0;"></div>
<svg class="r" style="left:82px;top:664px;" width="8" height="8" viewBox="0 0 8 8"><path d="M8 0V8H0A8 8 0 0 0 8 0Z" fill="#f7f7f7"/></svg>
<svg class="r" style="left:330.3px;top:664px;" width="8" height="8" viewBox="0 0 8 8"><path d="M0 0V8H8A8 8 0 0 1 0 0Z" fill="#f7f7f7"/></svg>
<div class="r" style="left:101px;top:648px;width:16px;height:16px;background:#ffffff;"></div>
<svg class="r" style="left:103px;top:649.5px;" width="12" height="13" viewBox="0 0 12 13"><path d="M5.2 0.3C6.8 2 5.6 3.6 4 5.2C2.4 6.8 1.4 8 1.8 10C2.1 11.6 3.4 12.6 4.6 12.8C3.6 11.6 3.8 10 5.2 8.6C5.8 9.8 6.6 10.2 6.6 11.6C6.6 12.2 6.3 12.6 6 12.9C8.6 12.7 10.6 10.8 10.4 8.2C10.3 6.6 9.4 5.6 8.8 4.8C8.6 5.8 8.2 6.4 7.4 6.8C8 4.4 7.2 1.6 5.2 0.3Z" fill="#dd4814"/></svg>
<div class="t" style="left:127.50px;top:647.00px;line-height:18px;font-size:13px;color:#1b1b1b;letter-spacing:-0.020px;-webkit-text-stroke:0.05px;">PHP 8.4.0-dev - phpinfo()</div>
<svg class="r" style="left:310.8px;top:652.5px;" width="8" height="8" viewBox="0 0 8 8"><path d="M0.6 0.6L7.4 7.4M7.4 0.6L0.6 7.4" stroke="#222" stroke-width="1.3" fill="none" stroke-linecap="round" stroke-linejoin="round"/></svg>
<svg class="r" style="left:341px;top:649px;" width="13.2" height="13.2" viewBox="0 0 13.2 13.2"><path d="M6.6 0.6V12.6M0.6 6.6H12.6" stroke="#222" stroke-width="1.3" fill="none" stroke-linecap="round" stroke-linejoin="round"/></svg>
<div class="r" style="left:0px;top:672px;width:1914px;height:37.3px;background:#f7f7f7;"></div>
<div class="r" style="left:0px;top:708.6px;width:1914px;height:1px;background:#e3e3e3;"></div>
<svg class="r" style="left:15px;top:684px;" width="16" height="14" viewBox="0 0 16 14"><path d="M15.3 7H1M7 0.8L0.8 7L7 13.2" stroke="#222" stroke-width="1.3" fill="none" stroke-linecap="round" stroke-linejoin="round"/></svg>
<svg class="r" style="left:58.5px;top:682.5px;" width="17" height="17" viewBox="0 0 17 17"><path d="M15.2 8.5A6.7 6.7 0 1 1 12.9 3.5M13.6 0.8V4.1H10.2" stroke="#222" stroke-width="1.3" fill="none" stroke-linecap="round" stroke-linejoin="round"/></svg>
<svg class="r" style="left:103.9px;top:683px;" width="14.2" height="15" viewBox="0 0 14.2 15"><path d="M0.8 6.6L7.1 0.9L13.4 6.6V13.3Q13.4 14.2 12.5 14.2H9.4V9.2Q9.4 8.4 8.6 8.4H5.6Q4.8 8.4 4.8 9.2V14.2H1.7Q0.8 14.2 0.8 13.3Z" stroke="#222" stroke-width="1.3" fill="none" stroke-linecap="round" stroke-linejoin="round"/></svg>
<div class="r" style="left:139px;top:676.2px;width:1274.6px;height:29.8px;background:#ffffff;border-radius:15px;"></div>
<svg class="r" style="left:157px;top:682.8px;" width="16" height="16" viewBox="0 0 16 16"><circle cx="8" cy="8" r="7.2" stroke="#5a5a5a" stroke-width="1.1" fill="none"/><path d="M8 7.2V11.6" stroke="#5a5a5a" stroke-width="1.3" stroke-linecap="round"/><circle cx="8" cy="4.8" r="0.9" fill="#5a5a5a"/></svg>
<div class="t" style="left:188.50px;top:680.30px;line-height:21px;font-size:15px;color:#1a1a1a;letter-spacing:0.100px;-webkit-text-stroke:0;">localhost</div>
<div class="t" style="left:249.20px;top:679.80px;line-height:21px;font-size:15px;color:#6f6f6f;letter-spacing:0.116px;-webkit-text-stroke:0;">:8080</div>
<div class="r" style="left:0px;top:709.6px;width:1914px;height:93px;background:#ffffff;border-radius:8px 0 0 0;"></div>
<div class="r" style="left:1897px;top:709.6px;width:17px;height:93px;background:#fafafa;border-left:1px solid #ececec;"></div>
<div class="r" style="left:1900px;top:712.6px;width:7px;height:17.4px;background:#7f7f7f;border-radius:3.5px;"></div>
<div class="r" style="left:481px;top:718px;width:934px;height:73.5px;background:#9092c5;border:1px solid #5a5a5a;box-shadow:1px 2px 3px #ccc;"></div>
<div class="t" style="left:486.80px;top:736.20px;line-height:25px;font-size:18px;color:#222222;letter-spacing:0.510px;-webkit-text-stroke:0.5px #222;">PHP Version 8.4.0–dev</div>
<svg class="r" style="left:1286px;top:721px" width="126" height="68" viewBox="0 0 126 68"><defs><linearGradient id="pg" x1="0.15" y1="0" x2="0.85" y2="1"><stop offset="0" stop-color="#b9bce0"/><stop offset="0.4" stop-color="#8285bd"/><stop offset="1" stop-color="#2f3172"/></linearGradient></defs><ellipse cx="62.6" cy="33.7" rx="60.6" ry="32" fill="url(#pg)"/><ellipse cx="62.6" cy="33.7" rx="58.6" ry="29.9" fill="#6d70ab"/><text transform="translate(63.6 42.9) scale(1.1 1)" x="0" y="0" text-anchor="middle" font-family="Liberation Sans" font-style="italic" font-weight="700" font-size="42.4" fill="#000" stroke="#fff" stroke-width="2.2" paint-order="stroke" stroke-linejoin="round">php</text></svg>
<div class="t" style="left:1300.80px;top:681.90px;line-height:18px;font-size:14.5px;color:#3a3a3a;-webkit-text-stroke:0;">a</div>
<svg class="r" style="left:1308.5px;top:684.5px;" width="10" height="12" viewBox="0 0 10 12"><path d="M1 3.2H8.6M4.6 0.8V5.6C4.6 9 2.2 10.8 1 9.4C0 8 2.4 5.6 5.8 5.6C8.8 5.6 9.8 8.8 6.8 10.8" stroke="#444" stroke-width="1" fill="none" stroke-linecap="round"/></svg>
<svg class="r" style="left:1342px;top:683px;" width="16" height="16" viewBox="0 0 16 16"><path d="M0.8 14.6L5.4 2.6L10 14.6M2.4 10.6H8.4" stroke="#444" stroke-width="1.1" fill="none" stroke-linecap="round" stroke-linejoin="round"/><path d="M10.2 4.6Q11.8 5.6 11.6 7.6M11.6 2.2Q14.4 4 14.2 7.8" stroke="#444" stroke-width="1" fill="none" stroke-linecap="round"/></svg>
<svg class="r" style="left:1381px;top:683px;" width="16.4" height="16.4" viewBox="0 0 16.4 16.4"><path d="M8.2 1L10.4 5.8L15.6 6.4L11.7 9.9L12.8 15.1L8.2 12.5L3.6 15.1L4.7 9.9L0.8 6.4L6 5.8Z" stroke="#444" stroke-width="1.1" fill="none" stroke-linejoin="round"/></svg>
<div class="r" style="left:1429.7px;top:679px;width:24px;height:24px;background:#ffffff;border-radius:50%;box-shadow:0 1px 3px rgba(0,0,0,.3);"></div>
<div class="t" style="left:1436.00px;top:680.30px;line-height:16px;font-size:15px;color:#1a1a1a;font-weight:700;">¶</div>
<svg class="r" style="left:1435.5px;top:694px;" width="14" height="6" viewBox="0 0 14 6"><path d="M0.5 3H12M9.4 0.6L12.4 3L9.4 5.4" stroke="#f57600" stroke-width="1.4" fill="none" stroke-linecap="round" stroke-linejoin="round"/></svg>
<svg class="r" style="left:1478px;top:683px;" width="16" height="16" viewBox="0 0 16 16"><g transform="translate(8 8)" fill="#5b5b5b"><rect x="-1.3" y="-8.2" width="2.6" height="3.4" transform="rotate(0)"/><rect x="-1.3" y="-8.2" width="2.6" height="3.4" transform="rotate(45)"/><rect x="-1.3" y="-8.2" width="2.6" height="3.4" transform="rotate(90)"/><rect x="-1.3" y="-8.2" width="2.6" height="3.4" transform="rotate(135)"/><rect x="-1.3" y="-8.2" width="2.6" height="3.4" transform="rotate(180)"/><rect x="-1.3" y="-8.2" width="2.6" height="3.4" transform="rotate(225)"/><rect x="-1.3" y="-8.2" width="2.6" height="3.4" transform="rotate(270)"/><rect x="-1.3" y="-8.2" width="2.6" height="3.4" transform="rotate(315)"/><circle r="5.6"/><path d="M-3 -1L1 -3L3 1L-1 3Z" fill="#f7f7f7"/></g></svg>
<svg class="r" style="left:1521.5px;top:682.5px;" width="17" height="17" viewBox="0 0 17 17"><path d="M5 0.3H12L16.7 5V12L12 16.7H5L0.3 12V5Z" fill="#e0162f"/><text x="8.6" y="11.2" text-anchor="middle" font-family="Liberation Sans" font-weight="700" font-size="7.3" letter-spacing="-0.3" fill="#fff">ABP</text></svg>
<svg class="r" style="left:1566px;top:683px;" width="16" height="16" viewBox="0 0 16 16"><circle cx="8" cy="8" r="8" fill="#f2a93b"/><path d="M5.4 3.6V12.4M5.6 8.6L10.6 3.8M7.4 7.4Q9 11 11 11.6A1.6 1.6 0 1 0 11.8 9.4" stroke="#fff" stroke-width="1.5" fill="none" stroke-linecap="round"/></svg>
<svg class="r" style="left:1610.5px;top:683.2px;" width="15.6" height="15.8" viewBox="0 0 15.6 15.8"><path d="M5.2 3.2Q4.6 0.7 6.9 0.7Q9.2 0.7 8.6 3.2H11.4Q12.4 3.2 12.4 4.2V6.6Q14.9 6 14.9 8.3Q14.9 10.6 12.4 10V13.6Q12.4 14.6 11.4 14.6H8.6Q9.2 12.2 6.9 12.2Q4.6 12.2 5.2 14.6H2.6Q1.6 14.6 1.6 13.6V10.6Q3.8 11.2 3.8 8.9Q3.8 6.6 1.6 7.2V4.2Q1.6 3.2 2.6 3.2Z" stroke="#2a2a2a" stroke-width="1.2" fill="none" stroke-linecap="round" stroke-linejoin="round"/></svg>
<div class="r" style="left:1642px;top:683px;width:1px;height:16px;background:#cfcfcf;"></div>
<svg class="r" style="left:1658.5px;top:682.3px;" width="16" height="17" viewBox="0 0 16 17"><path d="M5.6 2.6H2.6Q0.8 2.6 0.8 4.4V12.2Q0.8 14 2.6 14H5.6M10 2.6H13Q14.8 2.6 14.8 4.4V12.2Q14.8 14 13 14H10M7.8 0.7V16.3" stroke="#2a2a2a" stroke-width="1.2" fill="none" stroke-linecap="round" stroke-linejoin="round"/></svg>
<svg class="r" style="left:1704.5px;top:682.5px;" width="13" height="17" viewBox="0 0 13 17"><path d="M6.5 0.7V12.6M1.6 7.8L6.5 12.7L11.4 7.8M0.7 16H12.3" stroke="#2a2a2a" stroke-width="1.2" fill="none" stroke-linecap="round" stroke-linejoin="round"/></svg>
<svg class="r" style="left:1746.5px;top:683.5px;" width="18" height="17" viewBox="0 0 18 17"><path d="M8.4 13.6L2.2 7.6C-0.2 5 1 1 4.4 1C6.4 1 7.6 2.2 8.4 3.4C9.2 2.2 10.4 1 12.4 1C15.4 1 16.8 4.2 15.4 6.6" stroke="#2a2a2a" stroke-width="1.2" fill="none" stroke-linecap="round" stroke-linejoin="round"/><path d="M0.8 7.4H4.4L5.8 4.8L7.8 9.8L9.2 7.4H10.4" stroke="#2a2a2a" stroke-width="1" fill="none" stroke-linejoin="round" stroke-linecap="round"/><circle cx="14.2" cy="12.4" r="4.3" fill="#1a7f1a"/><path d="M12.2 12.5L13.7 14L16.2 11.2" stroke="#fff" stroke-width="1.1" fill="none" stroke-linecap="round" stroke-linejoin="round"/></svg>
<svg class="r" style="left:1790.5px;top:683.8px;" width="17" height="16" viewBox="0 0 17 16"><rect x="0.7" y="0.7" width="15.6" height="10.4" rx="1.6" stroke="#2a2a2a" stroke-width="1.2" fill="none" stroke-dasharray="2.6 1.7"/><path d="M6.2 4.6L10.4 12.6M10.8 4.6L6.6 12.6" stroke="#2a2a2a" stroke-width="1.1" stroke-linecap="round"/><circle cx="6" cy="13.9" r="1.4" stroke="#2a2a2a" stroke-width="1" fill="#f7f7f7"/><circle cx="11" cy="13.9" r="1.4" stroke="#2a2a2a" stroke-width="1" fill="#f7f7f7"/></svg>
<svg class="r" style="left:1833.6px;top:679.7px;" width="22.4" height="22.4" viewBox="0 0 22.4 22.4"><defs><clipPath id="av"><circle cx="11.2" cy="11.2" r="11.2"/></clipPath></defs><circle cx="11.2" cy="11.2" r="11.2" fill="#d5d2cf"/><g clip-path="url(#av)" fill="#8d8987"><circle cx="11.2" cy="8.6" r="4.6"/><ellipse cx="11.2" cy="20.4" rx="8.4" ry="6"/></g></svg>
<div class="r" style="left:1851px;top:680px;width:6px;height:6px;background:#e81123;border-radius:50%;"></div>
<div class="r" style="left:1884.9px;top:690px;width:1.8px;height:1.8px;background:#222;border-radius:50%;"></div>
<div class="r" style="left:1890.2px;top:690px;width:1.8px;height:1.8px;background:#222;border-radius:50%;"></div>
<div class="r" style="left:1895.5px;top:690px;width:1.8px;height:1.8px;background:#222;border-radius:50%;"></div>
</div></body></html>
